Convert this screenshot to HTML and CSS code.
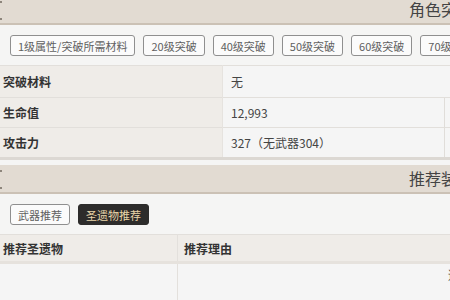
FILE: index.html
```html
<!DOCTYPE html>
<html lang="zh-CN">
<head>
    <meta charset="UTF-8">
    <meta name="viewport" content="width=device-width, initial-scale=1.0">
    <title>角色突破</title>
    <link rel="stylesheet" href="styles.css">
</head>
<body>
    <div class="page">

        <!-- 角色突破 -->
        <section class="bloco bloco-topo">
            <div class="bloco-titulo">角色突破</div>

            <div class="abas">
                <button class="aba">1级属性/突破所需材料</button>
                <button class="aba">20级突破</button>
                <button class="aba">40级突破</button>
                <button class="aba">50级突破</button>
                <button class="aba">60级突破</button>
                <button class="aba">70级突破</button>
                <button class="aba">80级突破</button>
            </div>

            <table class="tabela tabela-info">
                <tr>
                    <td class="rotulo">突破材料</td>
                    <td class="valor" colspan="2">无</td>
                </tr>
                <tr>
                    <td class="rotulo">生命值</td>
                    <td class="valor">12,993</td>
                    <td class="valor extra"></td>
                </tr>
                <tr>
                    <td class="rotulo">攻击力</td>
                    <td class="valor">327（无武器304）</td>
                    <td class="valor extra"></td>
                </tr>
            </table>
        </section>

        <!-- 推荐配装 -->
        <section class="bloco">
            <div class="bloco-titulo">推荐装备</div>

            <div class="abas">
                <button class="aba">武器推荐</button>
                <button class="aba ativa">圣遗物推荐</button>
            </div>

            <table class="tabela tabela-rec">
                <tr class="cabecalho">
                    <td class="col-item">推荐圣遗物</td>
                    <td class="col-razao">推荐理由</td>
                </tr>
                <tr>
                    <td class="col-item"></td>
                    <td class="col-razao"><span class="razao-texto">适合作为主C输出使用</span></td>
                </tr>
            </table>
        </section>

    </div>
</body>
</html>
```

FILE: styles.css
```css
body {
    margin: 0;
    padding: 0;
    background-color: #f5f5f4;
    font-family: "Noto Sans CJK SC", "Noto Sans", sans-serif;
    color: #333;
    overflow: hidden;
}

.page {
    width: 882px;
}

.bloco-topo {
    margin-top: -4px;
}

.bloco-titulo {
    position: relative;
    background-color: #e2dbd2;
    border-bottom: 2px solid #cbc1b5;
    height: 27px;
    line-height: 27px;
    text-align: center;
    font-size: 16px;
    color: #444;
    white-space: nowrap;
}

/* pontinhos nos cantos */
.bloco-titulo::before,
.bloco-titulo::after {
    content: "";
    position: absolute;
    left: 0;
    width: 2px;
    height: 2px;
    background-color: #8d857b;
}

.bloco-titulo::before {
    top: 5px;
}

.bloco-titulo::after {
    bottom: 3px;
}

.abas {
    display: flex;
    gap: 8px;
    padding: 10px 10px 9px;
    white-space: nowrap;
}

.aba {
    height: 21px;
    padding: 0 7px;
    font-family: inherit;
    font-size: 11px;
    color: #606060;
    background-color: #fbfbfb;
    border: 1px solid #8f8f8f;
    border-radius: 3px;
    cursor: pointer;
}

.aba.ativa {
    background-color: #2d2c2b;
    border-color: #2d2c2b;
    color: #ead6a9;
}

.tabela {
    width: 100%;
    border-collapse: collapse;
    font-size: 12px;
}

.tabela td {
    border-top: 1px solid #e2dfdb;
    padding: 0;
}

.tabela-info {
    border-bottom: 3px solid #dcd8d3;
    margin-bottom: 5px;
}

.tabela-info tr:first-child td {
    height: 31px;
}

.tabela-info td {
    height: 29px;
}

.rotulo {
    width: 219px;
    padding-left: 3px !important;
    background-color: #efece8;
    font-weight: 600;
    color: #333;
    border-right: 1px solid #e6e3df;
}

.valor {
    width: 213px;
    padding-left: 8px !important;
    color: #444;
    background-color: #f5f5f5;
}

.valor.extra {
    width: auto;
    border-left: 1px solid #e0ddd9;
}

.tabela-rec .cabecalho td {
    height: 26px;
    background-color: #efece8;
    font-weight: 600;
    color: #333;
    border-bottom: 3px solid #e6e2dd;
}

.col-item {
    width: 174px;
    padding-left: 3px !important;
    border-right: 1px solid #e3e0dc;
}

.col-razao {
    padding-left: 6px !important;
}

.tabela-rec tr:last-child td {
    height: 40px;
    vertical-align: top;
    background-color: #f5f5f5;
}

.razao-texto {
    display: inline-block;
    padding: 2px 0 0 264px;
    color: #444;
}
```
